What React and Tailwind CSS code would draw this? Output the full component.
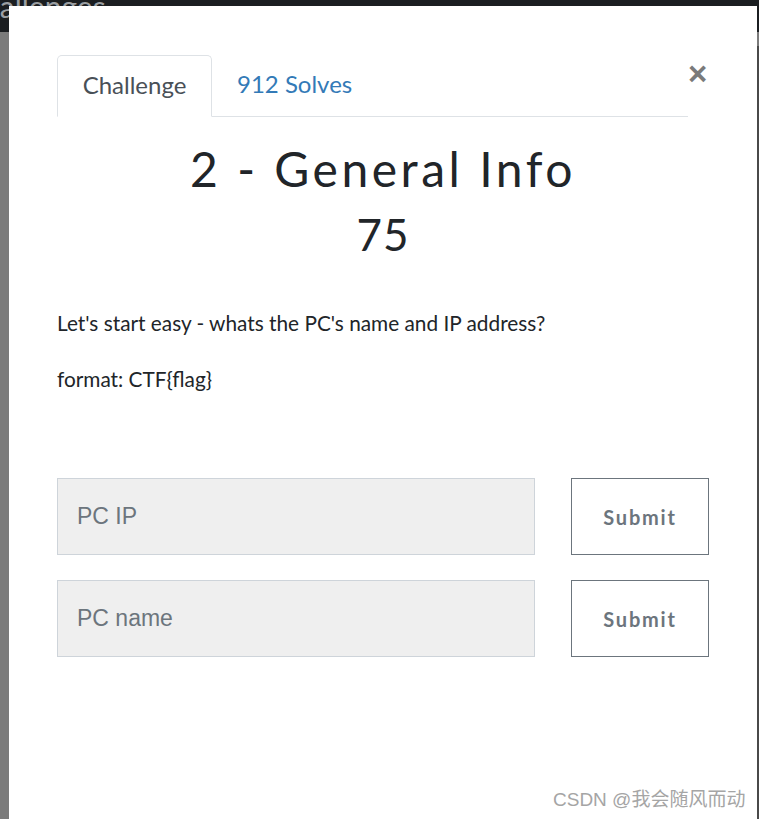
export default function App() {
  return (
    <div className="relative h-[819px] w-[759px] overflow-hidden bg-[#7b7b7b] font-['Lato',sans-serif]">
      <div className="h-[46px] bg-[#1b1e21]">
        <span className="block -ml-[37px] -mt-[14px] text-[30px] leading-[40px] text-[#9a9ea2] font-['Lato',sans-serif]">
          Challenges
        </span>
      </div>
      <div className="absolute right-0 top-[46px] h-full w-[2px] bg-[#4a4a4a]" />

      {/* modal */}
      <div className="absolute left-[9px] top-[6px] h-[900px] w-[748px] bg-white">
        <div className="flex pl-[48px] pr-[69px] pt-[48px]">
          <div className="flex flex-1 items-end border-b border-[#dee2e6]">
            <div className="-mb-px flex h-[62px] w-[155px] items-center justify-center rounded-t-[5px] border border-b-white border-[#dee2e6] bg-white pb-[2px] text-[24px] text-[#495057]">
              Challenge
            </div>
            <div className="flex h-[62px] items-center px-[25px] pb-[2px] text-[24px] text-[#337ab7]">
              912 Solves
            </div>
          </div>
        </div>
        <button className="absolute left-[679px] top-[51px] text-[33px] font-bold leading-none text-[#7a7a7a] font-['Liberation_Sans',sans-serif]">
          ×
        </button>

        <div className="mt-[20px] text-center text-[#212529]">
          <h2 className="text-[48px] font-normal leading-[64px] tracking-[3.5px]">2 - General Info</h2>
          <h3 className="mt-[5px] text-[44px] font-normal leading-[56px] tracking-[1px]">75</h3>
        </div>

        <div className="mt-[47px] pl-[48px] text-[20.8px] leading-[28px] text-[#212529]">
          <p>Let's start easy - whats the PC's name and IP address?</p>
          <p className="mt-[28px]">format: CTF{"{flag}"}</p>
        </div>

        <div className="mt-[85px] flex flex-col gap-[25px] pl-[48px]">
          {["PC IP", "PC name"].map((label) => (
            <div key={label} className="flex items-center">
              <div className="flex h-[77px] w-[478px] items-center border border-[#ced4da] bg-[#efefef] px-[19px] text-[23px] text-[#6c757d] font-['Liberation_Sans',sans-serif]">
                {label}
              </div>
              <button className="ml-[36px] h-[77px] w-[138px] border border-[#6c757d] text-[20px] font-bold tracking-[1.8px] text-[#6c757d]">
                Submit
              </button>
            </div>
          ))}
        </div>
      </div>

      <div className="absolute left-[553px] top-[786px] text-[19px] text-[#a5a5a5] font-['Liberation_Sans','Noto_Sans_CJK_SC',sans-serif]">
        CSDN @我会随风而动
      </div>
    </div>
  );
}
